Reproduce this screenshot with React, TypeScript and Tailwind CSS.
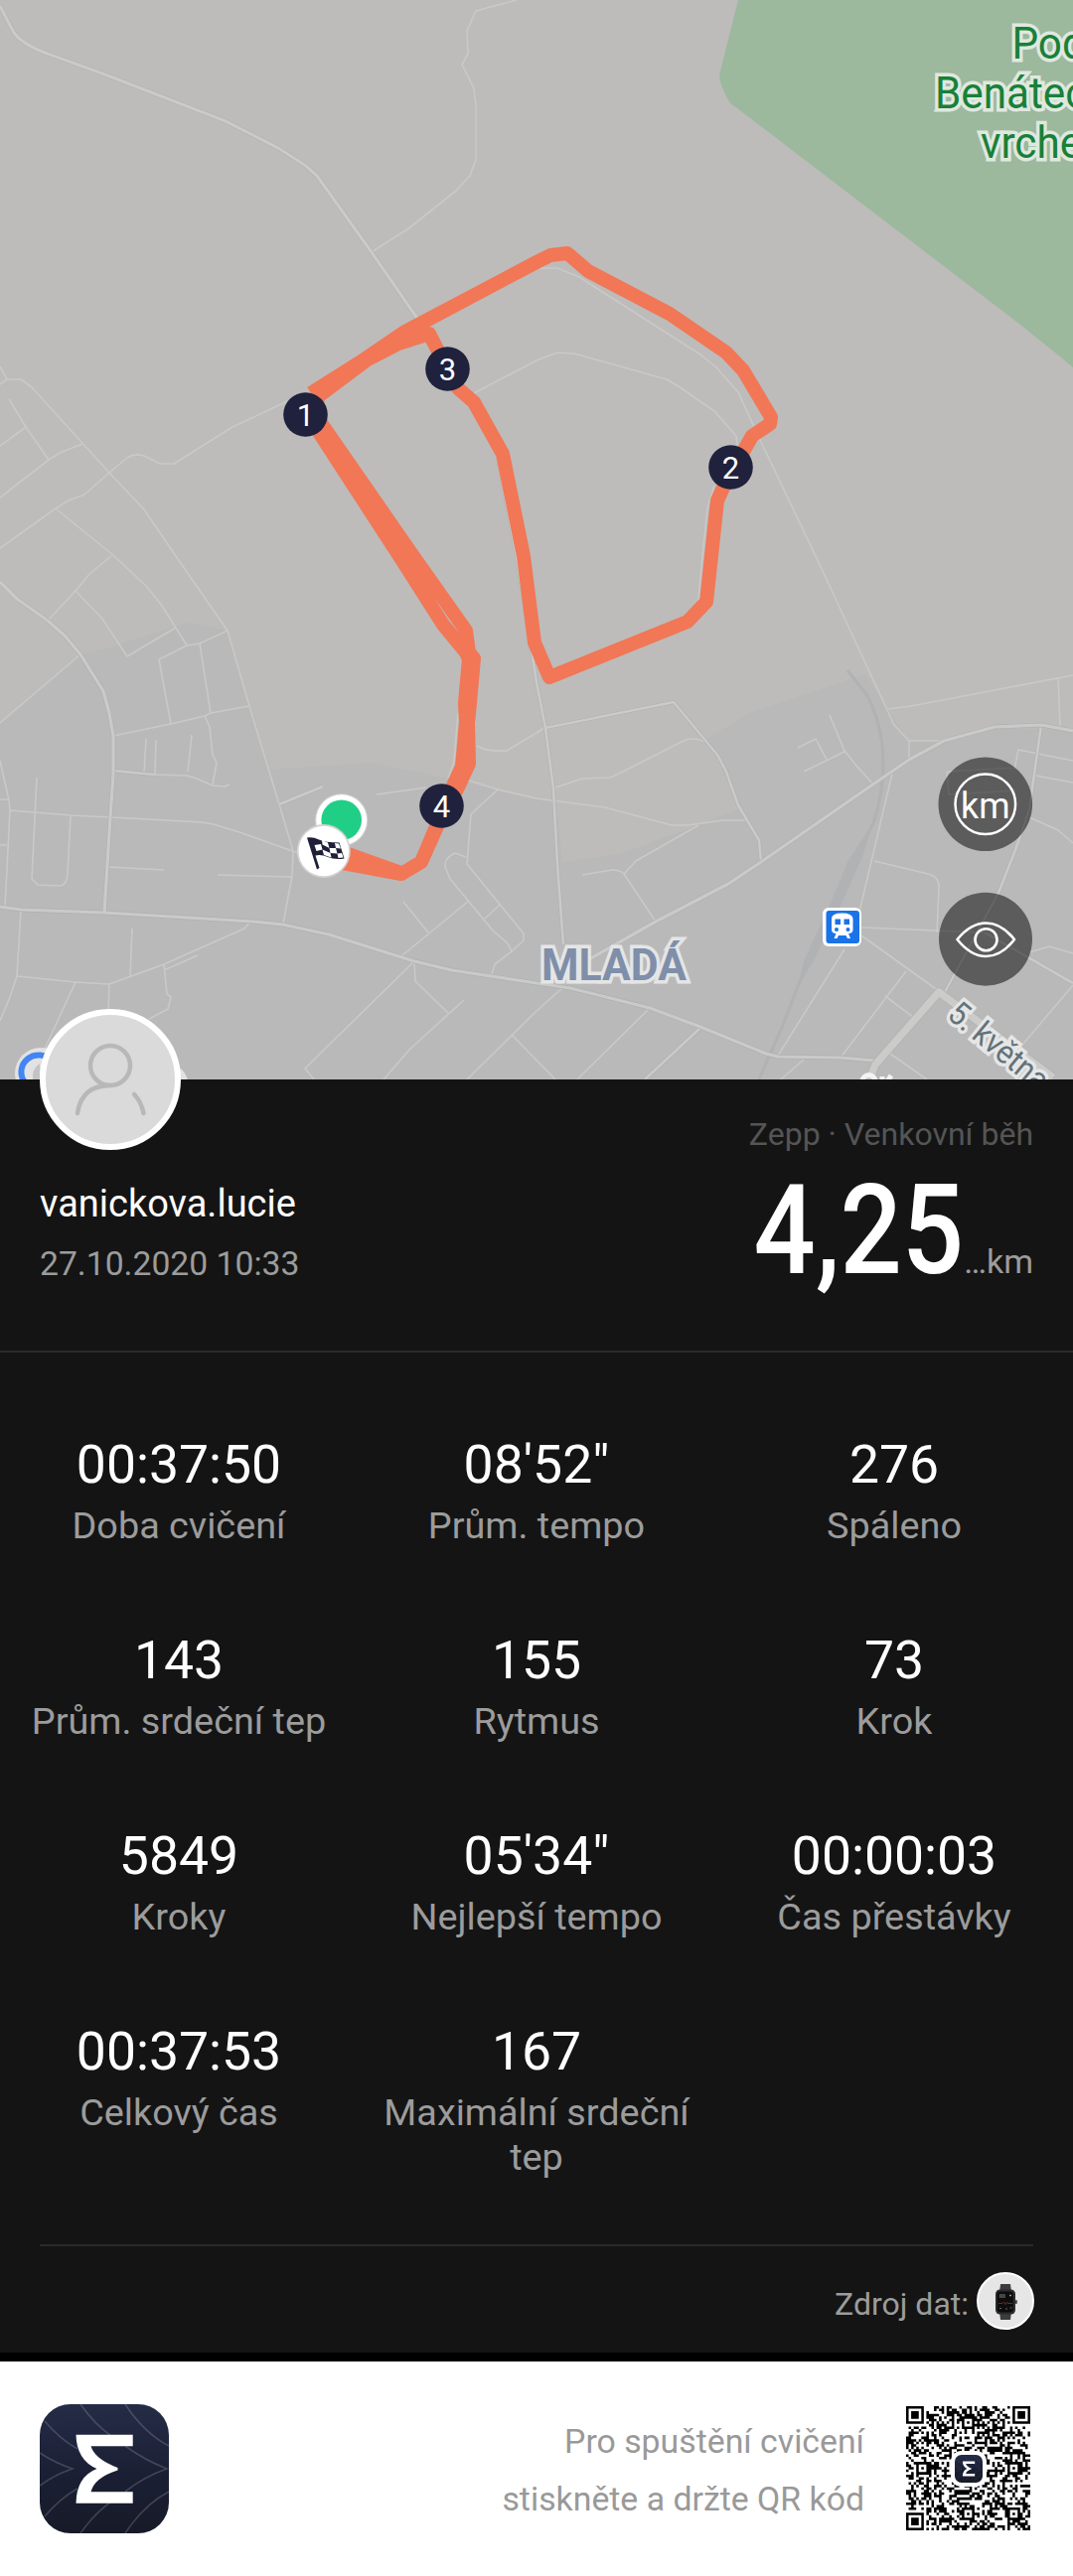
const THIN_ROADS = [
    "M520 0L479 11L470 31L471 54L465 65L477 89L479 107V161L473 177L458 193L410 231L375 253",
    "M0 369L7 382L21 382L32 390L110 476L145 513L177 560L229 635L251 711L281 810L295 857L294 882L285 930",
    "M0 387L7 382M9 402L26 430L49 463M0 449L26 430M0 501L49 463L60 456L83 447",
    "M0 552L56 512L69 504L85 498L110 476L128 461Q136 456 145 459L161 467H175L234 430L289 404",
    "M56 512L115 560L148 591L163 610L177 632L188 650L201 648L229 635",
    "M112 560L90 578L76 595L48 625M76 595L103 623L128 661L177 632",
    "M0 728L81 659M188 650L160 664L172 729M201 648L212 718M114 741L172 729L206 721L212 718L251 711",
    "M206 721L211 732L214 760L218 768L214 790M155 780L188 781L198 784L214 791L226 792L231 790",
    "M147 744L145 778M157 745L156 780M193 740L189 777",
    "M0 766L9 806L10 816L5 913M10 816L71 821L112 823L203 828L215 830L241 838L300 859",
    "M37 783L32 885L38 891L60 892Q67 892 68 880L71 822M0 805H8M0 851H7M108 873L165 876M219 881L294 883",
    "M21 916L17 983L10 1004L0 1028M17 983L76 989L110 991L165 971L246 935L252 928M133 935L131 983M76 989L45 1056M110 991L109 1020",
    "M165 971L168 1001L172 1004L169 1016L150 1026M165 977L199 962M379 800L429 793",
    "M472 786L501 795L540 804L609 813L676 831H692L728 826H752",
    "M501 795L474 820L470 870L527 940V947L515 958L498 971L495 981",
    "M469 863L458 859Q447 864 448 873L453 885L496 937L511 950L515 958M503 911L488 925M472 907L405 962M406 908L431 939",
    "M417 968L314 1069L307 1076L316 1087M417 968L418 988L451 1020M467 1007L413 1056L386 1087M567 994L540 1018L470 1087M516 1043L559 1087",
    "M654 1015L581 1087M480 751Q489 757 510 756L540 738L549 732M461 718L457 767L451 784",
    "M559 793L586 784L614 783L623 779L690 745Q700 742 712 748",
    "M586 881L616 876Q624 876 628 880L660 928M628 880L640 867L703 831",
    "M543 270H561L583 279L705 357L721 370L743 395L765 443L821 560L900 730L915 746V765M915 746L950 746M894 714L917 711L1080 680M1065 682L1067 732",
    "M477 396L540 363L561 355L578 356L671 382L683 389L719 414L741 439L742 448M719 489L712 512L707 560L703 605",
    "M803 753L821 744L832 765M809 777L850 757M835 720L850 756L862 771L879 790",
    "M898 779L865 918M880 867L934 880Q945 883 945 892L943 939M867 934L991 939M867 942L945 998M850 956L783 1063",
    "M912 978L846 1065M891 1003L920 1025M1036 959L1056 953L1080 960M1080 992L1030 1051M809 1067L786 1087M896 1061L933 1087",
    "M1080 766L1025 755L1021 775M1043 781L1080 788M1036 823L1065 836L1080 849M953 777L1021 773M953 778L955 800L1023 796",
];

const MID_ROADS = [
    "M114 776L155 780M281 810L325 792M705 1035L649 1087",
    "M549 733L678 707L712 748L722 760L731 777L743 811L764 846L766 867",
    "M501 461L520 560L540 687L549 733L557 794L561 870L567 951",
    "M1048 730L1036 815L1022 856L1005 899L951 999M991 939L1080 990",
];

const MAIN_ROADS = [
    "M0 6L14 33Q22 44 45 53L103 74L227 122L280 149L308 167L319 177L374 254L430 335",
    "M0 586L17 603L48 625L65 640L81 659L104 696L110 718L114 741V780L111 823L105 919",
    "M0 913L21 916L105 919L255 928L285 931L331 941L417 968L455 977L540 990L574 995L654 1015L705 1034L771 1061L783 1064L846 1065L881 1068",
    "M585 971L593 966L660 928L733 890L766 868L877 791L915 765L950 746L1001 732L1048 730L1080 736",
];

const ROUTE =
    "M345 858L404 879M345 863L404 879M345 869L404 880L424 868L440 830L455 793L465 772L469 728L468 708L472 664L469 657L446 629L402 560L313 423" +
    "M424 868L446 819L460 795L472 769L471 728L473 708L477 663L472 657L469 635L416 560L321 423M316 420L409 560L428 591" +
    "M313 396L362 365L406 335L421 327L540 264L554 257L571 255L592 273L674 316L731 355L748 373L776 420L775 427L757 439L748 455L728 491L722 504L716 560L711 606L692 626L553 682L538 647L527 560L506 457L477 405L461 391L450 371L432 336L401 346L370 362L322 398L313 412M370 362L410 338L428 333";

const MARKERS = [
    { n: "1", x: 307.5, y: 417.5 },
    { n: "3", x: 450.5, y: 371.5 },
    { n: "2", x: 735.5, y: 470.5 },
    { n: "4", x: 444.5, y: 811.5 },
];

const STATS = [
    ["00:37:50", "Doba cvičení"],
    ["08'52\"", "Prům. tempo"],
    ["276", "Spáleno"],
    ["143", "Prům. srdeční tep"],
    ["155", "Rytmus"],
    ["73", "Krok"],
    ["5849", "Kroky"],
    ["05'34\"", "Nejlepší tempo"],
    ["00:00:03", "Čas přestávky"],
    ["00:37:53", "Celkový čas"],
    ["167", "Maximální srdeční tep"],
];

const RouteMap = () => {
    return (
        <svg className="block h-[1087px] w-[1080px]" viewBox="0 0 1080 1087" fill="none" fontFamily="Roboto, sans-serif">
            <rect width="1080" height="1087" fill="#bdbcba" />
            {/* built-up area */}
            <path
                d="M0 728L81 659L114 651L188 627L229 635L272 775L372 768L454 784L540 804L560 810L566 868L623 860L690 836L747 813L712 744L753 718L871 679L915 746L950 746L1001 732L1080 736V1087H0Z"
                fill="#b9b9b9"
            />
            {/* forest */}
            <path d="M743 0L725 72Q723 80 727 88L732 99Q735 105 742 109L1022 323L1067 359L1080 370V0Z" fill="#9cb89d" />

            {/* railway */}
            <path d="M853 675L872 699Q884 720 888 750L889 767Q889 800 879 829L867 853L840 911L812 970L788 1032L764 1087" stroke="#b0b2b3" strokeWidth="3" />
            <path d="M877 832L869 860L848 908L820 965L803 995L809 968L838 905L853 868Z" fill="#b0b2b3" />

            <g strokeLinejoin="round">
                {THIN_ROADS.map((d) => <path key={d} d={d} stroke="#c9c9c8" strokeWidth="1.6" />)}
                {MID_ROADS.map((d) => <path key={d} d={d} stroke="#aeb0b1" strokeWidth="3.8" />)}
                {MID_ROADS.map((d) => <path key={d + "f"} d={d} stroke="#cacac9" strokeWidth="2.6" />)}
                {MAIN_ROADS.map((d) => <path key={d} d={d} stroke="#aeb0b1" strokeWidth="4.4" />)}
                {MAIN_ROADS.map((d) => <path key={d + "f"} d={d} stroke="#cacac9" strokeWidth="3.2" />)}
                <path d="M874 1090L881 1072L945 999L1060 1085" stroke="#b0b1b1" strokeWidth="9" />
                <path d="M874 1090L881 1072L945 999L1060 1085" stroke="#cbcbca" strokeWidth="7.5" />
            </g>

            {/* labels */}
            <g paintOrder="stroke" strokeLinejoin="miter">
                <g fontSize="44" fill="#188038" stroke="#dfe8df" strokeWidth="7">
                    <text transform="translate(1018.5 58.5) scale(.96 1)">Pod</text>
                    <text transform="translate(941 108.5) scale(.96 1)">Benátecký</text>
                    <text transform="translate(987 158.5) scale(.96 1)">vrchem</text>
                </g>
                <text x="545" y="986.5" textLength="146" lengthAdjust="spacingAndGlyphs" fontSize="45" fontWeight="700" fill="#7f8fa9" stroke="#e5e5e5" strokeWidth="7">MLADÁ</text>
                <text transform="translate(952 1024) rotate(39.5)" fontSize="33" textLength="120" lengthAdjust="spacingAndGlyphs" fill="#63727a" stroke="#e6e6e6" strokeWidth="7">5. května</text>
            </g>
            <path d="M868 1089A6.5 6.5 0 0 1 881 1089M888 1087V1084M893 1089L897 1083" stroke="#f3f3f3" strokeWidth="5" />

            <g>
                <circle cx="41" cy="1081" r="26" fill="#e2e2e2" />
                <circle cx="170" cy="1091" r="19" fill="#e2e2e2" />
                <path d="M25 1090A16.5 16.5 0 0 1 52 1069" stroke="#4285f4" strokeWidth="6" />
                <path d="M40 1071Q32 1076 33 1087H40Z" fill="#c3c3c3" />
            </g>

            {/* station */}
            <rect x="828" y="914" width="39" height="39" rx="6" fill="#fff" />
            <rect x="831.5" y="917" width="33.5" height="33" rx="3" fill="#1a73e8" />
            <path d="M837 925Q837 919.500 847.500 919.500T858.500 925V936Q858.500 940 854 940L856 945H853L851.500 942H844L842.500 945H839.500L841.500 940Q837 940 837 936Z" fill="#fff" />
            <path d="M840.500 925.500H846V931H840.500ZM849.500 925.500H855V931H849.500Z" fill="#1a73e8" />
            <circle cx="842" cy="936" r="2" fill="#1a73e8" />
            <circle cx="853.5" cy="936" r="2" fill="#1a73e8" />

            <path d={ROUTE} stroke="#f17756" strokeWidth="14" strokeLinejoin="round" />

            {MARKERS.map((m) => (
                <g key={m.n}>
                    <circle cx={m.x} cy={m.y} r="22.3" fill="#1f213d" />
                    <text x={m.x} y={m.y + 11} fontSize="31" fill="#fff" textAnchor="middle">{m.n}</text>
                </g>
            ))}

            {/* start and finish */}
            <circle cx="343.7" cy="825.8" r="26.5" fill="#d3d3d3" />
            <circle cx="343.7" cy="825.8" r="25.5" fill="#fff" />
            <circle cx="343.7" cy="825.8" r="20.3" fill="#20cf85" />
            <circle cx="325.8" cy="857" r="27" fill="#d6d1d0" />
            <circle cx="325.8" cy="857" r="25.300" fill="#fff" />
            <path d="M309 843.500Q315 842.500 321 845.500T341.500 848.500L346.500 864.500Q337 866 330 863T317.500 861.500L321.500 874L319 875.500Z" fill="#1f1f38" />
            <path d="M316.500 851L323 850L324.500 855.500L318.500 857ZM324 846L330 848.500L331.500 854L324.500 850.500ZM331.500 854L338 854L339.500 859.500L332.500 859ZM324.500 855.500L332.500 859L333.500 863.500L326 861ZM337 849L341 849.500L343 854.500L338 854ZM339.500 859.500L344 859L345.500 863.500L340.500 864Z" fill="#fff" />

            {/* map buttons */}
            <circle cx="991.8" cy="809.700" r="47.300" fill="#000" fillOpacity=".5" />
            <circle cx="991.8" cy="809.700" r="30.3" stroke="#fff" strokeWidth="2.500" />
            <text x="991.8" y="823.500" fontSize="36" fill="#fff" textAnchor="middle" textLength="49.5" lengthAdjust="spacingAndGlyphs">km</text>
            <circle cx="992" cy="945.700" r="47" fill="#000" fillOpacity=".5" />
            <path d="M963.500 946Q977 929.500 992.500 929.500T1021 946Q1008 963 992.500 963T963.500 946Z" stroke="#fff" strokeWidth="2.600" strokeLinejoin="round" />
            <circle cx="992.5" cy="946.200" r="11" stroke="#fff" strokeWidth="2.600" />
        </svg>
    );
};

const ZeppMark = ({ id }: { id: string }) => {
    return (
        <svg className="block h-full w-full" viewBox="0 0 130 130" fill="none">
            <defs>
                <linearGradient id={id} x1="0" y1="0" x2="0" y2="1">
                    <stop offset="0" stopColor="#242c46" />
                    <stop offset=".55" stopColor="#1b1f34" />
                    <stop offset="1" stopColor="#161a28" />
                </linearGradient>
            </defs>
            <rect width="130" height="130" rx="31" fill={`url(#${id})`} />
            <path
                d="M5 17Q20 35 38 45M41 0Q55 20 72 32M86 42Q105 56 128 65Q105 73 86 88M86 0Q105 29 130 42M0 49Q15 59 33 65Q15 71 0 82M5 113Q20 95 38 85M41 130Q55 110 72 98M86 130Q105 101 130 88"
                stroke="#fff"
                strokeOpacity=".17"
                strokeWidth="1.600"
            />
            <path d="M36.500 30.700H93.700V42.300H51.500Q55 55 78.500 64V66.500Q55 74 51.500 88.300H93.700V99.700H36.500Q37 73 57.500 65Q37 56 36.500 30.700Z" fill="#fff" />
        </svg>
    );
};

const QR_SIZE = 49;

// finder, alignment and timing patterns, with filler for the data modules
const isDark = (x: number, y: number) => {
    const finders = [[3, 3], [QR_SIZE - 4, 3], [3, QR_SIZE - 4]];
    for (const [cx, cy] of finders) {
        const d = Math.max(Math.abs(x - cx), Math.abs(y - cy));
        if (d <= 4) return d !== 4 && d !== 2;
    }
    for (const cx of [6, 24, 42]) {
        for (const cy of [6, 24, 42]) {
            if ((cx === 6 && cy !== 24) || (cy === 6 && cx === 42)) continue;
            const d = Math.max(Math.abs(x - cx), Math.abs(y - cy));
            if (d <= 2) return d !== 1;
        }
    }
    if (x === 6 || y === 6) return (x + y) % 2 === 0;
    let h = (x * 374761393 + y * 668265263) | 0;
    h = Math.imul(h ^ (h >>> 13), 1274126177);
    return ((h ^ (h >>> 16)) & 1) === 1;
};

const QrCode = () => {
    let d = "";
    for (let y = 0; y < QR_SIZE; y++) {
        for (let x = 0; x < QR_SIZE; x++) {
            if (isDark(x, y)) d += `M${x} ${y}h1v1h-1z`;
        }
    }
    return (
        <div className="relative h-[125px] w-[125px]">
            <svg className="block h-full w-full" viewBox="0 0 49 49">
                <path d={d} fill="#000" />
            </svg>
            <div className="absolute top-[45px] left-[45px] h-9 w-9 rounded-[10px] bg-white p-1">
                <ZeppMark id="qrMark" />
            </div>
        </div>
    );
};

const Avatar = () => {
    return (
        <div className="absolute top-[-71px] left-10 h-[142px] w-[142px] rounded-full border-[6px] border-white bg-[#dadada]">
            <svg className="block h-full w-full" viewBox="0 0 130 130" fill="none" stroke="#b8b8b8" strokeWidth="4.500" strokeLinecap="round">
                <circle cx="65" cy="51" r="20" />
                <path d="M32 99Q36 71 65 71M89 80Q96 87 98.500 99" />
            </svg>
        </div>
    );
};

const Watch = () => {
    return (
        <div className="h-[58px] w-[58px] rounded-full border-2 border-white bg-[#e6e6e6]">
            <svg className="block h-full w-full" viewBox="0 0 54 54">
                <path d="M22 10H32L33 18H21ZM21 38H33L32 46H22Z" fill="#3b3d3d" />
                <rect x="17" y="15.500" width="20" height="25" rx="4.500" fill="#2b2d2d" />
                <rect x="18.800" y="17.500" width="16" height="21" rx="3" fill="#0d0d0e" />
                <rect x="37" y="26" width="1.800" height="4" rx=".8" fill="#444" />
                <path d="M21 21H27M21 23H27" stroke="#a9a9a9" strokeWidth="1.200" strokeDasharray="1.500 .6" />
                <path d="M31 21.500H33" stroke="#a7a04c" strokeWidth="1.500" />
                <path d="M20 29.500H24L25.500 28L27 30.500L28.500 28.500L30 29.500H34" stroke="#6e2a22" strokeWidth="1" fill="none" />
                <path d="M21 34.500H23M27 35H29M31.500 34H33.500" stroke="#666" strokeWidth="1.200" />
            </svg>
        </div>
    );
};

export default function App() {
    return (
        <main className="w-[1080px] bg-[#141414] font-[Roboto,sans-serif]">
            <RouteMap />

            {/* user and distance */}
            <section className="relative flex h-[275px] justify-between border-b-2 border-[#2b2b2b] px-10">
                <Avatar />
                <div className="pt-[101px]">
                    <p className="text-[38px] leading-[48px] text-white">vanickova.lucie</p>
                    <p className="mt-[15px] text-[33.700px] leading-[44px] text-[#9c9c9c]">27.10.2020 10:33</p>
                </div>
                <div className="flex flex-col items-end pt-[34px]">
                    <p className="text-[32px] leading-[42px] text-[#555]">Zepp · Venkovní běh</p>
                    <div className="mt-[6px] flex items-baseline">
                        <span className="origin-right scale-x-[.87] text-[126px] leading-[140px] font-medium text-white">4,25</span>
                        <span className="text-[34px] text-[#9c9c9c]">…km</span>
                    </div>
                </div>
            </section>

            {/* stats */}
            <section className="grid h-[898px] auto-rows-[197px] grid-cols-3 content-start pt-[79px]">
                {STATS.map(([value, label]) => (
                    <div key={label} className="flex flex-col items-center text-center">
                        <p className="text-[53.500px] leading-[67px] text-white">{value}</p>
                        <p className="mt-[6px] max-w-[330px] text-[37.800px] leading-[44.500px] text-[#9c9c9c]">{label}</p>
                    </div>
                ))}
            </section>

            {/* data source */}
            <section className="mx-10 flex h-[109px] items-start justify-end border-t-2 border-[#2b2b2b] pt-[26px]">
                <p className="mr-2 pt-[11px] text-[32px] leading-[42px] text-[#9c9c9c]">Zdroj dat:</p>
                <div className="-mr-px">
                    <Watch />
                </div>
            </section>

            <footer className="flex h-[225px] items-start border-t-[9px] border-black bg-white px-10 pt-[43px]">
                <div className="h-[130px] w-[130px]">
                    <ZeppMark id="appMark" />
                </div>
                <p className="mr-[42px] ml-auto pt-[9px] text-right text-[33.800px] leading-[58px] text-[#999]">
                    Pro spuštění cvičení
                    <br />
                    stiskněte a držte QR kód
                </p>
                <div className="mt-[2px] mr-[3px]">
                    <QrCode />
                </div>
            </footer>
        </main>
    );
}
